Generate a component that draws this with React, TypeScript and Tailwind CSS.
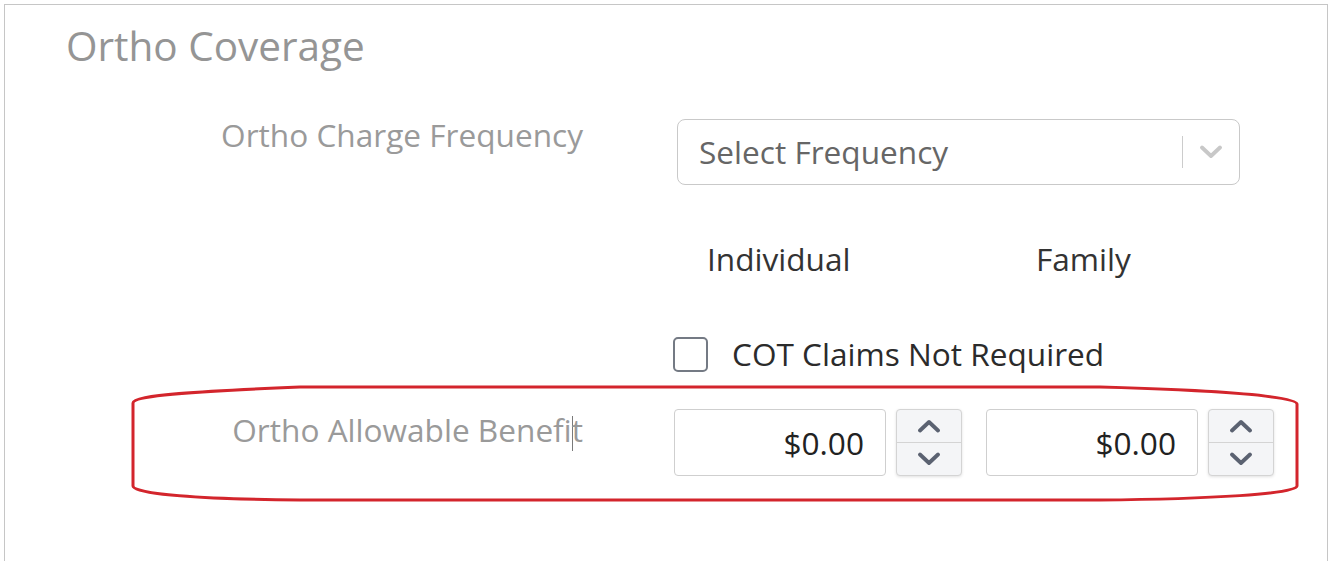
import React from "react";

const Chevron = ({ up, color, sw }: { up?: boolean; color: string; sw: number }) => (
  <svg width="24" height="14" viewBox="0 0 24 14" fill="none">
    <path
      d={up ? "M3 11.5 L12 3 L21 11.5" : "M3 2.5 L12 11 L21 2.5"}
      stroke={color}
      strokeWidth={sw}
      strokeLinecap="round"
      strokeLinejoin="round"
    />
  </svg>
);

const Money = () => (
  <div className="flex items-center">
    <div className="w-[212px] h-[67px] border-[1.5px] border-[#cfcfcf] rounded-[4px] bg-white flex items-center justify-end pr-[21px] text-[31.6px] text-[#222]">
      $0.00
    </div>
    <div className="ml-[10px] w-[66px] h-[67px] border-[1.5px] border-[#d4d4d4] rounded-[4px] bg-[#f4f5f7] shadow-[0_1px_3px_rgba(0,0,0,0.12)] flex flex-col">
      <div className="flex-1 flex items-center justify-center border-b-[1.5px] border-[#d4d4d4]">
        <Chevron up color="#5b6271" sw={3.8} />
      </div>
      <div className="flex-1 flex items-center justify-center">
        <Chevron color="#5b6271" sw={3.8} />
      </div>
    </div>
  </div>
);

export default function App() {
  return (
    <div
      className="relative h-[561px] overflow-hidden bg-white pl-[4px] pt-[4px] pr-[3px]"
      style={{ fontFamily: '"Open Sans", "Noto Sans", sans-serif' }}
    >
      <div className="h-[700px] border-l-[1.5px] border-t-[1.5px] border-r-[1.5px] border-[#c6c6c6]">
        <div className="pl-[61px] pt-[17px] text-[40.5px] leading-[48px] text-[#959595]">Ortho Coverage</div>

        {/* Row 1 */}
        <div className="flex mt-[44px]">
          <div className="w-[578px] text-right text-[31.6px] leading-[42px] text-[#9a9a9a]">
            Ortho Charge Frequency
          </div>
          <div className="ml-[94px] mt-[5px] w-[563px] h-[66px] border-[1.5px] border-[#c9c9c9] rounded-[8px] flex items-center">
            <div className="flex-1 pl-[21px] text-[31.6px] text-[#666]">Select Frequency</div>
            <div className="w-[1.5px] h-[32px] bg-[#cccccc]" />
            <div className="w-[56px] flex items-center justify-center">
              <Chevron color="#c8c8c8" sw={3.8} />
            </div>
          </div>
        </div>

        {/* Row 2 */}
        <div className="flex mt-[53px] text-[31.6px] leading-[42px] text-[#333]">
          <div className="w-[578px]" />
          <div className="ml-[91px] pl-[33px] w-[362px]">Individual</div>
          <div>Family</div>
        </div>

        {/* Row 3 */}
        <div className="flex mt-[53px] items-center text-[31.6px] leading-[42px] text-[#2b2b2b]">
          <div className="w-[578px]" />
          <div className="ml-[90px] w-[35px] h-[35px] border-2 border-[#747a84] rounded-[5px] bg-white" />
          <div className="ml-[24px]">COT Claims Not Required</div>
        </div>

        {/* Row 4 */}
        <div className="flex mt-[34px]">
          <div className="w-[578px] text-right text-[31.6px] leading-[42px] text-[#9a9a9a]">
            Ortho Allowable Benefi
            <span className="inline-block w-px h-[35px] bg-[#7a7a7a] align-middle -mr-px" />
            t
          </div>
          <div className="ml-[91px] flex gap-[24px]">
            <Money />
            <Money />
          </div>
        </div>
      </div>

      <svg
        className="absolute left-0 top-0 pointer-events-none"
        width="1331"
        height="561"
        viewBox="0 0 1331 561"
        fill="none"
      >
        <path
          d="M 133 403 C 133 395, 200 391, 300 387 L 1100 387 C 1210 390, 1297 396, 1297 404 L 1297 486 C 1297 494, 1210 499, 1100 500 L 300 500 C 200 499, 133 494, 133 486 Z"
          stroke="#d3252c"
          strokeWidth="3"
        />
      </svg>
    </div>
  );
}
